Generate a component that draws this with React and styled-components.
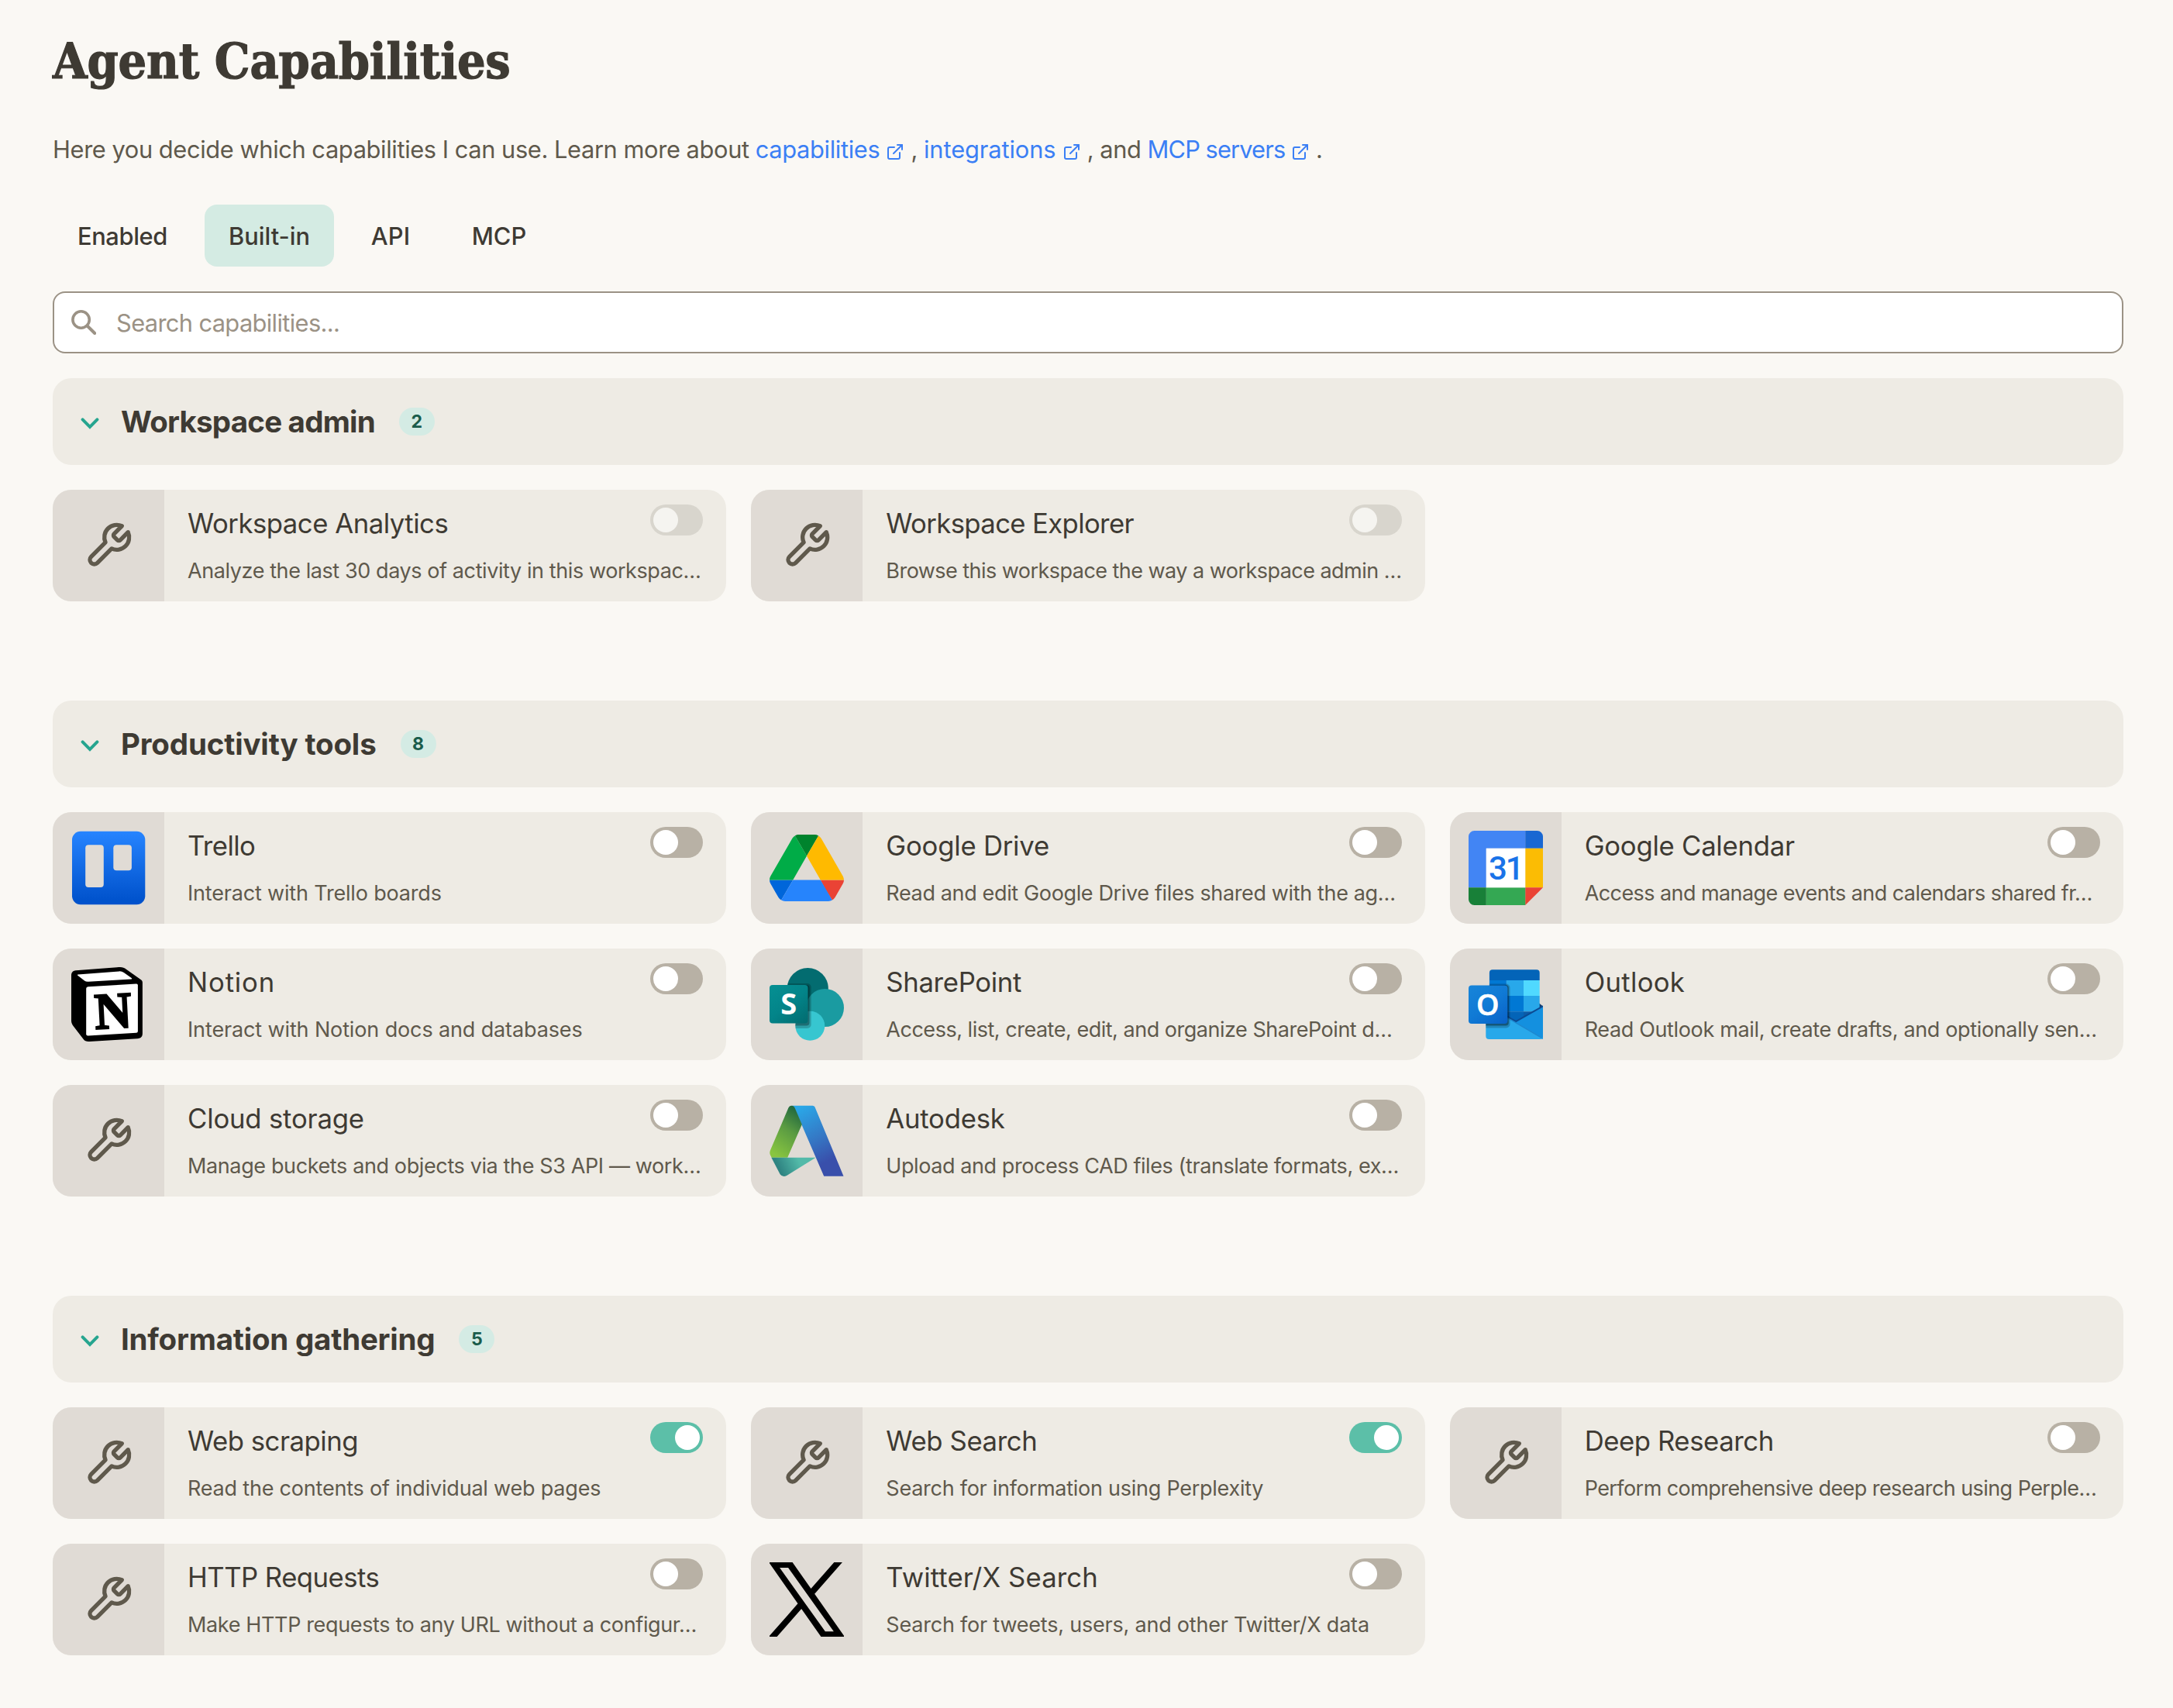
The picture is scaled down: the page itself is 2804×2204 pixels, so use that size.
import { useState } from "react";
import { ExternalLink } from "lucide-react";
import styled, { createGlobalStyle } from "styled-components";

const GlobalStyle = createGlobalStyle`
  * {
    box-sizing: border-box;
  }
  body {
    margin: 0;
    background: #faf8f4;
    color: #3e3a33;
    font-family: Inter, "Liberation Sans", sans-serif;
  }
`;

// --- Data --- //
const TABS = [
  { label: "Enabled", width: 180, track: -0.35 },
  { label: "Built-in", width: 167, track: -0.05 },
  { label: "API", width: 114, track: 0.2 },
  { label: "MCP", width: 134, track: 0 },
];

// track is the letter spacing in px of the title and of the description
const SECTIONS = [
  {
    title: "Workspace admin",
    track: -0.79,
    items: [
      {
        name: "Workspace Analytics",
        text: "Analyze the last 30 days of activity in this workspac…",
        track: [-0.48, -0.41],
        locked: true,
      },
      {
        name: "Workspace Explorer",
        text: "Browse this workspace the way a workspace admin …",
        track: [-0.63, -0.54],
        locked: true,
      },
    ],
  },
  {
    title: "Productivity tools",
    track: -0.16,
    items: [
      {
        name: "Trello",
        text: "Interact with Trello boards",
        track: [-0.57, -0.18],
        icon: TrelloLogo,
      },
      {
        name: "Google Drive",
        text: "Read and edit Google Drive files shared with the ag…",
        track: [-0.22, -0.36],
        icon: DriveLogo,
      },
      {
        name: "Google Calendar",
        text: "Access and manage events and calendars shared fr…",
        track: [-0.25, -0.57],
        icon: CalendarLogo,
      },
      {
        name: "Notion",
        text: "Interact with Notion docs and databases",
        track: [0.85, -0.13],
        icon: NotionLogo,
      },
      {
        name: "SharePoint",
        text: "Access, list, create, edit, and organize SharePoint d…",
        track: [-0.33, -0.48],
        icon: SharePointLogo,
      },
      {
        name: "Outlook",
        text: "Read Outlook mail, create drafts, and optionally sen…",
        track: [0.3, -0.35],
        icon: OutlookLogo,
      },
      {
        name: "Cloud storage",
        text: "Manage buckets and objects via the S3 API — work…",
        track: [-0.18, -0.38],
      },
      {
        name: "Autodesk",
        text: "Upload and process CAD files (translate formats, ex…",
        track: [-0.22, -0.42],
        icon: AutodeskLogo,
      },
    ],
  },
  {
    title: "Information gathering",
    track: -0.22,
    items: [
      {
        name: "Web scraping",
        text: "Read the contents of individual web pages",
        track: [-0.48, -0.2],
        on: true,
      },
      {
        name: "Web Search",
        text: "Search for information using Perplexity",
        track: [-0.36, -0.26],
        on: true,
      },
      {
        name: "Deep Research",
        text: "Perform comprehensive deep research using Perple…",
        track: [-0.43, -0.57],
      },
      {
        name: "HTTP Requests",
        text: "Make HTTP requests to any URL without a configur…",
        track: [-0.52, -0.36],
      },
      {
        name: "Twitter/X Search",
        text: "Search for tweets, users, and other Twitter/X data",
        track: [0.12, -0.21],
        icon: XLogo,
      },
    ],
  },
];

// --- Style --- //
const Page = styled.main`
  width: 2804px;
  min-height: 2204px;
  padding: 39px 64px 68px 68px;
`;

const Title = styled.h1`
  margin: 0;
  font-family: "DejaVu Serif Condensed", "DejaVu Serif", serif;
  font-size: 64px;
  font-weight: 700;
  line-height: 80px;
  letter-spacing: -0.2px;
  -webkit-text-stroke: 1.2px currentColor;
`;

const Intro = styled.p`
  margin: 50px 0 47px;
  font-size: 30.8px;
  line-height: 48px;
  letter-spacing: -0.35px;
  word-spacing: -0.3px;
  color: #5f594c;
`;

const DocLink = styled.a`
  color: #3b7ff5;
  letter-spacing: ${(props) => props.$track}px;

  svg {
    vertical-align: -4px;
  }
`;

const Tabs = styled.nav`
  display: flex;
  gap: 16px;
`;

const Tab = styled.button`
  width: ${(props) => props.$width}px;
  height: 80px;
  padding: 1px 0 0;
  border: 0;
  border-radius: 16px;
  background: ${(props) => (props.$active ? "#d4ebe3" : "transparent")};
  color: inherit;
  font: 500 30.8px/48px Inter, "Liberation Sans", sans-serif;
  letter-spacing: ${(props) => props.$track}px;
`;

const SearchBox = styled.label`
  display: flex;
  align-items: center;
  gap: 26px;
  height: 80px;
  margin: 32px 0;
  padding: 0 22px;
  border: 2px solid #9b9285;
  border-radius: 16px;
  background: #fff;
`;

const SearchInput = styled.input`
  flex: 1;
  height: 72px;
  padding: 0;
  border: 0;
  outline: 0;
  background: none;
  color: inherit;
  font: 400 30.8px Inter, "Liberation Sans", sans-serif;
  letter-spacing: -0.63px;

  &::placeholder {
    color: #9b9285;
    opacity: 1;
  }
`;

const Sections = styled.div`
  display: flex;
  flex-direction: column;
  gap: 128px;
`;

const SectionHeader = styled.header`
  display: flex;
  align-items: center;
  height: 112px;
  margin-bottom: 32px;
  padding-left: 36px;
  border-radius: 24px;
  background: #eeebe4;
`;

const SectionTitle = styled.h2`
  margin: 0 31px 0 28px;
  font-size: 38.5px;
  font-weight: 700;
  line-height: 48px;
  letter-spacing: ${(props) => props.$track}px;
`;

const Count = styled.span`
  min-width: 46px;
  height: 36px;
  border-radius: 18px;
  background: #d4ebe4;
  color: #1a5c4b;
  font-size: 23.1px;
  font-weight: 700;
  line-height: 36px;
  text-align: center;
`;

const Grid = styled.div`
  display: grid;
  grid-template-columns: repeat(3, 1fr);
  gap: 32px;
`;

const Card = styled.article`
  display: flex;
  min-width: 0;
  height: 144px;
  border-radius: 24px;
  overflow: hidden;
  background: #eeebe4;
`;

const CardIcon = styled.div`
  flex: none;
  display: flex;
  align-items: center;
  justify-content: center;
  width: 144px;
  background: #e0dbd5;
`;

const CardBody = styled.div`
  flex: 1;
  min-width: 0;
  padding: 19px 30px 0;
`;

const CardTop = styled.div`
  display: flex;
  justify-content: space-between;
  align-items: flex-start;
`;

const CardTitle = styled.h3`
  margin: 0;
  font-size: 34.7px;
  font-weight: 400;
  line-height: 48px;
  letter-spacing: ${(props) => props.$track}px;
`;

const CardText = styled.p`
  margin: 20px 0 0;
  font-size: 27px;
  line-height: 36px;
  letter-spacing: ${(props) => props.$track}px;
  white-space: nowrap;
  color: #5f594c;
`;

const Toggle = styled.button`
  flex: none;
  display: flex;
  justify-content: ${(props) => (props.$on ? "flex-end" : "flex-start")};
  width: 68px;
  height: 40px;
  padding: 4px;
  border: 0;
  border-radius: 20px;
  background: ${(props) => (props.$on ? "#5cbfa8" : "#b8b1a5")};

  &:disabled {
    background: #d8d5cd;
  }
`;

const Knob = styled.span`
  width: 32px;
  height: 32px;
  border-radius: 50%;
  background: ${(props) => (props.$dim ? "#f5f4f0" : "#fff")};
`;

// --- Icons --- //
function SearchIcon() {
  return (
    <svg width="32" height="32" viewBox="0 0 32 32" fill="none" stroke="#9b9285">
      <circle cx="12.6" cy="12.5" r="10.7" strokeWidth="3.6" />
      <path d="M20.6 20.5 30.2 30" strokeWidth="4" strokeLinecap="round" />
    </svg>
  );
}

function Chevron() {
  return (
    <svg width="24" height="20" viewBox="0 0 24 20" fill="none">
      <path
        d="M2.6 7.3 12 16.8 21.4 7.3"
        stroke="#26a58f"
        strokeWidth="4"
        strokeLinecap="round"
      />
    </svg>
  );
}

function WrenchIcon() {
  return (
    <svg
      width="64"
      height="64"
      viewBox="0 0 24 24"
      fill="none"
      stroke="#5f594c"
      strokeWidth="2"
      strokeLinecap="round"
      strokeLinejoin="round"
    >
      <path d="M14.7 6.3a1 1 0 0 0 0 1.4l1.6 1.6a1 1 0 0 0 1.4 0l3.77-3.77a6 6 0 0 1-7.94 7.94l-6.91 6.91a2.12 2.12 0 0 1-3-3l6.91-6.91a6 6 0 0 1 7.94-7.94l-3.76 3.76z" />
    </svg>
  );
}

function TrelloLogo() {
  return (
    <svg width="96" height="96" viewBox="0 0 96 96">
      <defs>
        <linearGradient id="trello" x1="0" y1="0" x2="0" y2="1">
          <stop offset="0" stopColor="#2684ff" />
          <stop offset="0.95" stopColor="#0052cc" />
        </linearGradient>
      </defs>
      <rect x="1" y="0.8" width="94.3" height="94.4" rx="11" fill="url(#trello)" />
      <rect x="18.2" y="18.2" width="23.6" height="54.8" rx="4" fill="#e0dbd5" />
      <rect x="54.3" y="18.2" width="23.6" height="33" rx="4" fill="#e0dbd5" />
    </svg>
  );
}

function DriveLogo() {
  return (
    <svg width="96" height="86" viewBox="0 0 87.3 78">
      <path d="m6.6 66.85 3.85 6.65c.8 1.4 1.95 2.5 3.3 3.3l13.75-23.8h-27.5c0 1.55.4 3.1 1.2 4.5z" fill="#0066da" />
      <path d="m43.65 25-13.75-23.8c-1.35.8-2.5 1.9-3.3 3.3l-25.4 44a9.06 9.06 0 0 0 -1.2 4.5h27.5z" fill="#00ac47" />
      <path d="m73.55 76.8c1.35-.8 2.5-1.9 3.3-3.3l1.6-2.75 7.65-13.25c.8-1.4 1.2-2.95 1.2-4.5h-27.502l5.852 11.5z" fill="#ea4335" />
      <path d="m43.65 25 13.75-23.8c-1.35-.8-2.9-1.2-4.5-1.2h-18.5c-1.6 0-3.15.45-4.5 1.2z" fill="#00832d" />
      <path d="m59.8 53h-32.3l-13.75 23.8c1.35.8 2.9 1.2 4.5 1.2h50.8c1.6 0 3.15-.45 4.5-1.2z" fill="#2684fc" />
      <path d="m73.4 26.5-12.7-22c-.8-1.4-1.95-2.5-3.3-3.3l-13.75 23.8 16.15 28h27.45c0-1.55-.4-3.1-1.2-4.5z" fill="#ffba00" />
    </svg>
  );
}

function CalendarLogo() {
  return (
    <svg width="96" height="96" viewBox="0 0 96 96">
      <path d="M7.5 0H73.2V22.8H22.8V73.2H0V7.5A7.5 7.5 0 0 1 7.5 0z" fill="#4285f4" />
      <path d="M73.2 0h15.3A7.5 7.5 0 0 1 96 7.5v15.3H73.2z" fill="#1967d2" />
      <path d="M73.2 22.8H96v50.4H73.2z" fill="#fbbc04" />
      <path d="M73.2 73.2H96L73.2 96z" fill="#ea4335" />
      <path d="M22.8 73.2h50.4V96H22.8z" fill="#34a853" />
      <path d="M0 73.2h22.8V96H7.5A7.5 7.5 0 0 1 0 88.5z" fill="#188038" />
      <path d="M22.8 22.8h50.4v50.4H22.8z" fill="#fff" />
      <text
        x="47.8"
        y="63.3"
        textAnchor="middle"
        fontFamily="Roboto, sans-serif"
        fontSize="42"
        fontWeight="500"
        letterSpacing="-2"
        fill="#1a73e8"
      >
        31
      </text>
    </svg>
  );
}

function NotionLogo() {
  return (
    <svg width="96" height="96" viewBox="0 0 96 96">
      <path
        transform="scale(0.96)"
        d="M6.017 4.313l55.333 -4.087c6.797 -0.583 8.543 -0.19 12.817 2.917l17.663 12.443c2.913 2.14 3.883 2.723 3.883 5.053v68.243c0 4.277 -1.553 6.807 -6.99 7.193L24.467 99.967c-4.08 0.193 -6.023 -0.39 -8.16 -3.113L3.3 79.94c-2.333 -3.113 -3.3 -5.443 -3.3 -8.167V11.113c0 -3.497 1.553 -6.413 6.017 -6.8z"
        fill="#000"
      />
      <path d="M8.6 9.6 61.5 5.4Q65 5.1 67.8 7L78 14.2Q78.8 15.2 77.6 15.4L22 18.7Q19 18.9 17 17.4L8 10.4Q7.6 9.7 8.6 9.6z" fill="#fff" />
      <path d="M21.6 25.2 83.8 21.6Q85.9 21.5 85.9 23.4V82.4Q85.9 84.6 83.8 84.8L21.6 88.5Q19.2 88.6 19.2 86.4V27.8Q19.2 25.4 21.6 25.2z" fill="#fff" />
      <text
        x="54"
        y="78.5"
        textAnchor="middle"
        transform="rotate(-3 54 57)"
        fontFamily="Liberation Serif, serif"
        fontSize="66"
        fontWeight="700"
        fill="#000"
        stroke="#000"
        strokeWidth="2.4"
      >
        N
      </text>
    </svg>
  );
}

function SharePointLogo() {
  return (
    <svg width="96" height="96" viewBox="0 0 96 96">
      <defs>
        <linearGradient id="sharepoint" x1="0.1" y1="0" x2="0.9" y2="1">
          <stop offset="0" stopColor="#058f92" />
          <stop offset="0.5" stopColor="#038489" />
          <stop offset="1" stopColor="#026d71" />
        </linearGradient>
        <clipPath id="sharepointDots">
          <circle cx="49.3" cy="27.5" r="26.5" />
          <circle cx="71.5" cy="52.5" r="24.5" />
          <circle cx="52.3" cy="75.8" r="19" />
        </clipPath>
      </defs>
      <circle cx="49.3" cy="27.5" r="26.5" fill="#036c70" />
      <circle cx="71.5" cy="52.5" r="24.5" fill="#1a9ba1" />
      <circle cx="52.3" cy="75.8" r="19" fill="#37c6d0" />
      <g clipPath="url(#sharepointDots)">
        <rect x="2" y="21" width="51.7" height="58" rx="5" fill="#000" opacity="0.2" />
        <rect x="2" y="23" width="49.5" height="52.5" rx="4" fill="#000" opacity="0.3" />
      </g>
      <rect y="23" width="49.5" height="49.6" rx="4" fill="url(#sharepoint)" />
      <text
        x="24.8"
        y="61"
        textAnchor="middle"
        fontFamily="Open Sans, sans-serif"
        fontSize="38"
        fontWeight="700"
        fill="#fff"
      >
        S
      </text>
    </svg>
  );
}

function OutlookLogo() {
  return (
    <svg width="96" height="96" viewBox="0 0 96 96">
      <defs>
        <linearGradient id="outlook" x1="0.1" y1="0" x2="0.9" y2="1">
          <stop offset="0" stopColor="#1784d9" />
          <stop offset="0.5" stopColor="#107ad5" />
          <stop offset="1" stopColor="#0a63c9" />
        </linearGradient>
        <clipPath id="outlookBack">
          <rect x="26.9" y="3.3" width="64.8" height="72" rx="4" />
          <rect x="22.3" y="60" width="73.7" height="33" rx="4" />
        </clipPath>
      </defs>
      <path d="M91 46.6 96 50.4 91 56z" fill="#123b6d" />
      <path d="M30.9 3.3h56.8a4 4 0 0 1 4 4V17H26.9V7.3a4 4 0 0 1 4-4z" fill="#0364b8" />
      <path d="M26.9 17h22v20h-22zM49 37h22v20.2H49z" fill="#0078d4" />
      <path d="M49 17h22v20H49zM71 37h20.7v20.2H71z" fill="#28a8ea" />
      <path d="M71 17h20.7v20H71z" fill="#50d9ff" />
      <path d="M26.9 37H49v34H26.9z" fill="#0364b8" />
      <path d="M49 57.2h22V71H49z" fill="#0364b8" />
      <path d="M71 57.2h20.7L71 71z" fill="#0a5ba8" />
      <path d="M96 51 61 70.4 48 63v10l48 20z" fill="#1490df" />
      <path d="M96 50.4 61 70 50 64" fill="none" stroke="#0b4a92" strokeWidth="2" />
      <path d="M22.3 56 50.5 65.6 96 91.4Q95 93 92 93H26.3a4 4 0 0 1-4-4z" fill="#28a8ea" />
      <path d="M50 65.4 94.6 91.4" stroke="#1d87cf" strokeWidth="1.4" />
      <g clipPath="url(#outlookBack)">
        <rect x="2" y="21.5" width="51.5" height="57" rx="5" fill="#000" opacity="0.2" />
        <rect x="2" y="23" width="49.8" height="52.5" rx="4" fill="#000" opacity="0.35" />
      </g>
      <rect y="23.5" width="50.3" height="49.5" rx="4" fill="url(#outlook)" />
      <text
        x="24.7"
        y="62"
        textAnchor="middle"
        fontFamily="Open Sans, sans-serif"
        fontSize="37.5"
        fontWeight="600"
        fill="#fff"
        stroke="#fff"
        strokeWidth="0.6"
      >
        O
      </text>
    </svg>
  );
}

function AutodeskLogo() {
  return (
    <svg width="96" height="96" viewBox="0 0 96 96">
      <defs>
        <linearGradient id="adskGreen" x1="0.75" y1="0" x2="0.3" y2="1">
          <stop offset="0.05" stopColor="#256b3f" />
          <stop offset="0.45" stopColor="#5a9b42" />
          <stop offset="1" stopColor="#88c540" />
        </linearGradient>
        <linearGradient id="adskBlue" x1="0.2" y1="0" x2="0.6" y2="1">
          <stop offset="0" stopColor="#2aa8e8" />
          <stop offset="0.5" stopColor="#3577c4" />
          <stop offset="0.85" stopColor="#394fab" />
        </linearGradient>
        <linearGradient id="adskTeal" x1="0" y1="0.2" x2="1" y2="0">
          <stop offset="0.1" stopColor="#2f8482" />
          <stop offset="0.6" stopColor="#53baa9" />
        </linearGradient>
      </defs>
      <path d="M28.5 2.7H55.5Q57.6 2.7 58.5 4.6L95.5 93.7H70.2L32 5.4z" fill="url(#adskBlue)" />
      <path d="M24.4 5.6.9 60.5Q-.3 63.6 1 66.4L2.7 69.8H23.2L41.8 27 32.6 5.6Q31.4 2.7 28.5 2.7 25.5 2.7 24.4 5.6z" fill="url(#adskGreen)" />
      <path d="M2.4 69.8H59.6L22.2 93Q16.8 95.6 13.6 91.2z" fill="url(#adskTeal)" />
    </svg>
  );
}

function XLogo() {
  return (
    <svg width="96" height="96" viewBox="0 0 300 300.251" stroke="#000" strokeWidth="5">
      <path d="M178.57 127.15 290.27 0h-26.46l-97.03 110.38L89.34 0H0l117.13 166.93L0 300.25h26.46l102.4-116.59 81.8 116.59h89.34zM36.01 19.54H76.66l187.13 262.13h-40.66z" />
    </svg>
  );
}

// --- Component --- //
function Capability({ item }) {
  const [on, setOn] = useState(Boolean(item.on));
  const Icon = item.icon || WrenchIcon;

  return (
    <Card>
      <CardIcon>
        <Icon />
      </CardIcon>
      <CardBody>
        <CardTop>
          <CardTitle $track={item.track[0]}>{item.name}</CardTitle>
          <Toggle $on={on} disabled={item.locked} onClick={() => setOn(!on)}>
            <Knob $dim={item.locked} />
          </Toggle>
        </CardTop>
        <CardText $track={item.track[1]}>{item.text}</CardText>
      </CardBody>
    </Card>
  );
}

function App() {
  const [tab, setTab] = useState("Built-in");

  return (
    <>
      <GlobalStyle />
      <Page>
        <Title>Agent Capabilities</Title>
        <Intro>
          Here you decide which capabilities I can use. Learn more about{" "}
          <DocLink $track={-0.33}>
            capabilities <ExternalLink size={24} />
          </DocLink>{" "}
          ,{" "}
          <DocLink $track={-0.1}>
            integrations <ExternalLink size={24} />
          </DocLink>{" "}
          , and{" "}
          <DocLink $track={-0.85}>
            MCP servers <ExternalLink size={24} />
          </DocLink>{" "}
          .
        </Intro>
        <Tabs>
          {TABS.map((t) => (
            <Tab
              key={t.label}
              $width={t.width}
              $track={t.track}
              $active={t.label === tab}
              onClick={() => setTab(t.label)}
            >
              {t.label}
            </Tab>
          ))}
        </Tabs>
        <SearchBox>
          <SearchIcon />
          <SearchInput placeholder="Search capabilities..." />
        </SearchBox>
        <Sections>
          {SECTIONS.map((section) => (
            <section key={section.title}>
              <SectionHeader>
                <Chevron />
                <SectionTitle $track={section.track}>{section.title}</SectionTitle>
                <Count>{section.items.length}</Count>
              </SectionHeader>
              <Grid>
                {section.items.map((item) => (
                  <Capability key={item.name} item={item} />
                ))}
              </Grid>
            </section>
          ))}
        </Sections>
      </Page>
    </>
  );
}

export default App;
